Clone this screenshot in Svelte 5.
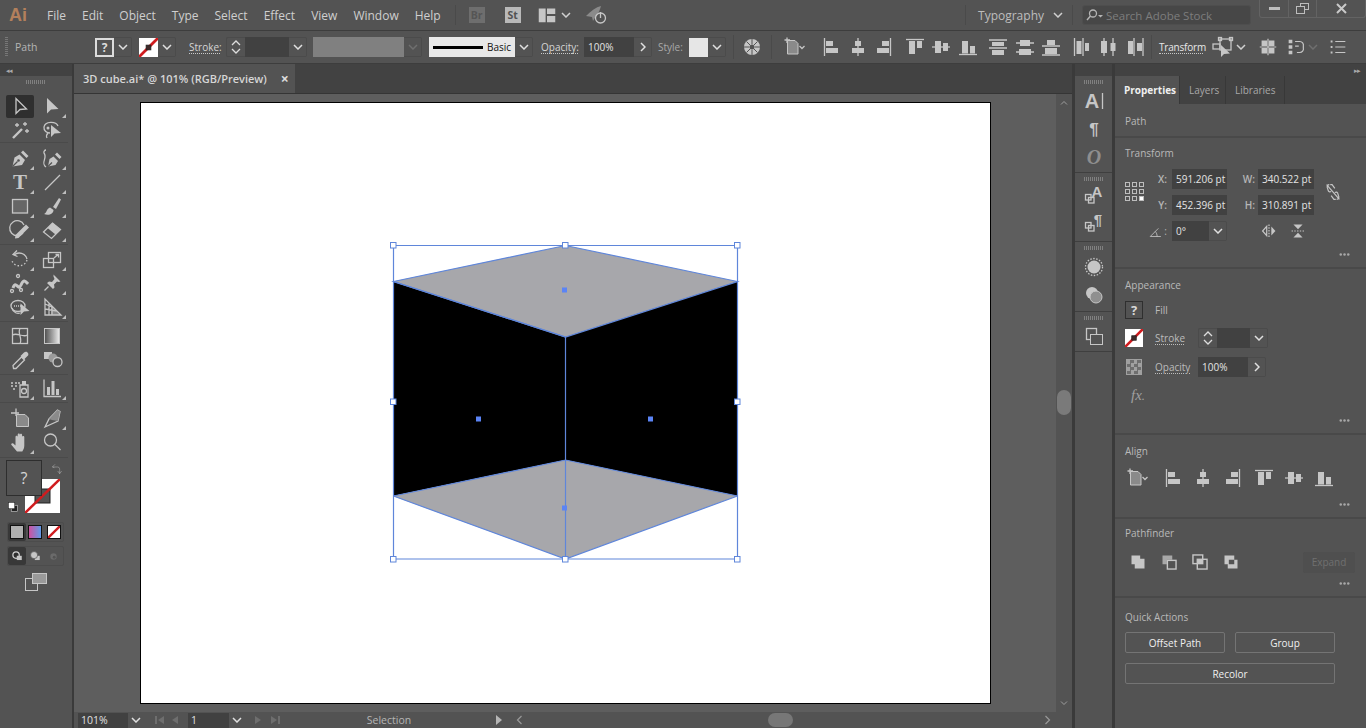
<script>
  const s = 'fill="none" stroke="#c6c6c6" stroke-width="1.3"';
  const f = 'fill="#c6c6c6"';
  const d = 'fill="none" stroke="#535353" stroke-width="1.2"';
  const serif = 'font-family="Liberation Serif" text-anchor="middle"';

  const icons = {
    select: `<path d="M8 4.500V19.500l4-4 6.500-.5z" ${s}/>`,
    direct: `<path d="M7 4V19.500l4-4 7.500-.5z" ${f}/>`,
    wand: `<path d="M5 20l9-9" fill="none" stroke="#c6c6c6" stroke-width="2.400"/><path d="M9 5v4M7 7h4M17 4v4M15 6h4M19 11v4M17 13h4" ${s} stroke-width="1"/>`,
    lasso: `<path d="M18 8C16 3 5 3 4 9c-.5 4 3 6 6 6M8 15c-1 1-2 3-1 5" ${s} stroke-width="1.600"/><circle cx="8" cy="10" r="1.500" ${f}/><path d="M11 7v12l3.500-3.500 6.500-.5z" ${f}/>`,
    pen: `<path d="M4.500 20.500l2-9 5-3 5.500 5.500-3 5z" ${f}/><path d="M4.500 20.500l5-5" ${d}/><circle cx="10.500" cy="14.500" r="1.300" fill="#535353"/><path d="M13 6.500L15 4.500l5.500 5.500-2 2z" ${f}/>`,
    curve: `<path d="M8 20.500l1.500-7.500 4-2.500 4.500 4.500-2.500 4z" ${f}/><path d="M15 8.500l2-2 4.500 4.500-2 2z" ${f}/><path d="M8 20.500l4-4" ${d}/><path d="M6 21C0 17 8 12 4 7c-.5-1 .5-3 2-3" ${s}/>`,
    type: `<text x="12" y="19" ${serif} font-weight="700" font-size="21" fill="#c6c6c6">T</text>`,
    line: `<path d="M5 20L20 5" ${s} stroke-width="1.500"/>`,
    rect: `<rect x="4.500" y="5.500" width="15" height="13.500" fill="#666" stroke="#c6c6c6" stroke-width="1.300"/>`,
    brush: `<path d="M13 13L19 4l2 1.500-5 9.500z" ${f}/><path d="M4 20c3-1 2-5 6-6.500l3.500 2.500c0 4-5 6-9.500 4z" ${f}/>`,
    shaper: `<path d="M15 15a7.500 7.500 0 1 1 1-8" ${s} stroke-width="2"/><path d="M7 20.500l.5-3.500L18 6.500l3 3L10.500 20z" ${f}/>`,
    eraser: `<path d="M3.500 14L12.500 5l8 6.500-9 9z" ${s}/><path d="M12.500 5l8 6.500-5 5-8-6.500z" ${f}/>`,
    rotate: `<path d="M9 3.500L5 7.500l4.500 2" ${s}/><path d="M6 8a8 8 0 0 1 13 4" ${s} stroke-width="1.500"/><path d="M19 13a8 8 0 0 1-15 1" ${s} stroke-width="1.500" stroke-dasharray="1.500 2"/>`,
    scale: `<rect x="3.500" y="11.500" width="10" height="9" ${s}/><rect x="8.500" y="5.500" width="12" height="10" ${s}/><path d="M14 11l4-3.500M15.500 7.500H18.500V10.500" ${s}/>`,
    warp: `<path d="M5 17c3-9 5 4 8-3s5-3 7-1" fill="none" stroke="#c6c6c6" stroke-width="3"/><circle cx="4" cy="20" r="1.500" ${s}/><circle cx="10" cy="5" r="1.500" ${s}/><circle cx="13" cy="19" r="1.500" ${s}/>`,
    pin: `<path d="M13.500 3.500l7 7-2 .5-1.500-.5-3 3 .5 3-1.500 1.500-6-6L9 10.500l3 .5 2.500-3-1-2.500z" ${f}/><path d="M8.500 15.500l-4 4" ${s}/>`,
    builder: `<ellipse cx="10" cy="11" rx="7" ry="5.500" ${s}/><path d="M6 11h7" ${s} stroke-dasharray="1 1"/><path d="M4 13c1 5 6 6 8 5" ${s}/><path d="M12.500 8.500v11.500l3.500-3.500 5.500-.5z" ${f}/>`,
    persp: `<path d="M5 4v16h16L5 4zM5 9l7 3v8M5 14l12 2M9 8.500V20" ${s} stroke-width="1"/><path d="M11 10l10 10H11z" fill="#c6c6c6" opacity=".45"/>`,
    mesh: `<rect x="4.500" y="4.500" width="15" height="15" ${s}/><path d="M4.500 11c5-3 10 3 15 0M12 4.500c-3 5 3 10 0 15" ${s} stroke-width="1"/>`,
    gradient: `<defs><linearGradient id="gr"><stop offset="0" stop-color="#4e4e4e"/><stop offset="1" stop-color="#ededed"/></linearGradient></defs><rect x="4.500" y="4.500" width="15" height="15" fill="url(#gr)" stroke="#c6c6c6"/>`,
    dropper: `<path d="M5.500 20.500l-.5-3 8.500-8.500 3 3-8.500 8.500z" ${s}/><path d="M12.500 8l3.500-3.500c2.500-2.500 6 1 3.500 3.500L16 11.500z" ${f}/>`,
    blend: `<rect x="4" y="4" width="8" height="7" ${f}/><circle cx="13" cy="10" r="4.500" fill="#9a9a9a"/><circle cx="17.500" cy="14" r="4.500" fill="#535353" stroke="#c6c6c6" stroke-width="1.300"/>`,
    spray: `<path d="M12 9h8v12h-8z" ${s}/><rect x="14" y="5" width="4" height="4" ${f}/><circle cx="16" cy="15" r="2.500" ${s}/><path d="M3 7h2M7 7h2M10 7h2M3 10h2M7 10h2M5 13h2" ${s} stroke-width="2"/>`,
    graph: `<path d="M4 3.500V20.500H21" ${s}/><path d="M7 11h3v8H7zM11.500 5h3v14h-3zM16 13h3v6h-3z" ${f}/>`,
    artboard: `<path d="M8 2.500V10M3 7h8" ${s} stroke-width="1"/><path d="M8.500 8.500H17l3.500 3.500v8.500h-12z" fill="#8a8a8a" stroke="#c6c6c6"/>`,
    slice: `<path d="M5 21L9 13 17.500 4l2.500 1.500-2 9.500z" ${s}/><path d="M9 13l8.500-9 2.500 1.500-2 9.500-6-1z" fill="#8a8a8a"/>`,
    hand: `<path d="M9 21.500L3.500 15c-1-1.200 .8-2.500 1.800-1.500L7.500 15.500V7c0-1.600 2.200-1.600 2.200 0V4.800c0-1.600 2.200-1.600 2.200 0V5c0-1.600 2.200-1.600 2.200 0V7c0-1.400 2.200-1.400 2.200 0v8.500c0 2.500-.8 4-2 6z" ${f}/>`,
    zoom: `<circle cx="10.500" cy="10" r="6" ${s} stroke-width="1.500"/><path d="M15 14.500l5.500 5.500" ${s} stroke-width="2.400"/>`,
    draw1: `<circle cx="10" cy="10" r="4.500" fill="#2e2e2e" stroke="#d2d2d2" stroke-width="1.800"/><rect x="11" y="11" width="7" height="6" ${f}/>`,
    draw2: `<rect x="11" y="11" width="7" height="6" ${f}/><circle cx="10" cy="10" r="5" ${f} stroke="#535353"/>`,
    draw3: `<circle cx="12" cy="12" r="4.500" fill="#6b6b6b"/><circle cx="13" cy="13" r="2" fill="#535353"/>`,
    screen: `<rect x="1.500" y="8.500" width="12" height="12" fill="#535353" stroke="#c6c6c6"/><rect x="8.500" y="3.500" width="14" height="10" fill="#9a9a9a" stroke="#c6c6c6"/>`,
    charA: `<text x="10" y="19" font-family="Liberation Sans" text-anchor="middle" font-weight="700" font-size="20" fill="#c6c6c6">A</text><path d="M20.500 4v16" ${s} stroke-width="1"/>`,
    para: `<text x="12" y="18" font-family="Liberation Sans" text-anchor="middle" font-weight="700" font-size="17" fill="#c6c6c6">¶</text>`,
    opent: `<text x="12" y="19" ${serif} font-style="italic" font-weight="700" font-size="20" fill="#8e8e8e">O</text>`,
    charS: `<text x="15" y="15" font-family="Liberation Sans" text-anchor="middle" font-weight="700" font-size="15" fill="#c6c6c6">A</text><rect x="3.500" y="12.500" width="5.500" height="5.500" ${s} stroke-width="1"/><rect x="6.500" y="15.500" width="5.500" height="5.500" ${s} stroke-width="1"/>`,
    paraS: `<text x="16" y="15" font-family="Liberation Sans" text-anchor="middle" font-weight="700" font-size="15" fill="#c6c6c6">¶</text><rect x="3.500" y="12.500" width="5.500" height="5.500" ${s} stroke-width="1"/><rect x="6.500" y="15.500" width="5.500" height="5.500" ${s} stroke-width="1"/>`,
    sphere: `<circle cx="12" cy="12" r="6.500" ${f}/><circle cx="12" cy="12" r="8.500" ${s} stroke-width="1" stroke-dasharray="1.500 1.500"/>`,
    trans: `<circle cx="10" cy="10" r="6" ${f}/><circle cx="14" cy="14" r="6" fill="#8f8f8f" stroke="#c6c6c6"/>`,
    layers: `<rect x="4.500" y="3.500" width="10" height="11" ${s} stroke-width="1"/><rect x="8.500" y="9.500" width="12" height="10" fill="#535353" stroke="#c6c6c6"/>`,
    globe: `<circle cx="12" cy="12" r="8" ${f}/><circle cx="12" cy="12" r="2.500" fill="#535353"/><path d="M12 4v5M12 15v5M4 12h5M15 12h5M6.500 6.500l3.500 3.500M14 14l3.500 3.500M17.500 6.500L14 10M10 14l-3.500 3.500" fill="none" stroke="#535353" stroke-width="1"/>`,
    abAlign: `<path d="M5 2.500V8M2.500 5H8" ${s} stroke-width="1"/><path d="M5.500 5.500H13l3 3v10.500H5.500z" fill="#8a8a8a" stroke="#c6c6c6"/><path d="M17.500 11l2.500 2.500 2.500-2.500" ${s} stroke-width="1"/>`,
    alL: `<path d="M5.500 3v18" ${s}/><path d="M7 6h7v5H7zM7 13h12v5H7z" ${f}/>`,
    alC: `<path d="M12 3v18" ${s}/><path d="M9 6h6v5H9zM6 13h12v5H6z" ${f}/>`,
    alR: `<path d="M18.500 3v18" ${s}/><path d="M10 6h7v5h-7zM5 13h12v5H5z" ${f}/>`,
    alT: `<path d="M3 4.500h18" ${s}/><path d="M6 6h6v13H6zM14 6h5v7h-5z" ${f}/>`,
    alM: `<path d="M3 12h18" ${s}/><path d="M6 6h6v12H6zM14 8h5v8h-5z" ${f}/>`,
    alB: `<path d="M3 19.500h18" ${s}/><path d="M6 6h6v12.500H6zM14 11h5v7.500h-5z" ${f}/>`,
    dT: `<path d="M3 5h18M3 13h18" ${s}/><path d="M6 7h12v4H6zM6 15h12v5H6z" ${f}/>`,
    dM: `<path d="M3 8h18M3 17h18" ${s}/><path d="M7 5h10v6H7zM6 14h12v6H6z" ${f}/>`,
    dB: `<path d="M3 11h18M3 20h18" ${s}/><path d="M8 5h8v5H8zM6 13h12v6H6z" ${f}/>`,
    dL: `<path d="M4.500 3v18M13 3v18" ${s}/><path d="M6.500 6h5v13h-5zM15 8h4v8h-4z" ${f}/>`,
    dC: `<path d="M8 3v18M17 3v18" ${s}/><path d="M5 6h6v12H5zM14.500 8h5v8h-5z" ${f}/>`,
    dR: `<path d="M11 3v18M20 3v18" ${s}/><path d="M5 6h5v13H5zM14 8h5v8h-5z" ${f}/>`,
    tfBox: `<rect x="9" y="4" width="11" height="11" ${s} stroke-width="1"/><rect x="7.500" y="2.500" width="3" height="3" ${s} stroke-width="1"/><rect x="18.500" y="2.500" width="3" height="3" ${s} stroke-width="1"/><rect x="2" y="9" width="7" height="5" ${s} stroke-width="1"/><path d="M10 10v12l3-3 6-.5z" ${f}/>`,
    snap: `<path d="M5 5h6v6H5zM13 5h6v6h-6zM5 13h6v6H5zM13 13h6v6h-6z" ${f}/><path d="M12 3v18M3 12h18" ${s} stroke-width="1"/>`,
    isolate: `<path d="M4 4h4v4H4zM4 10h4v4H4zM4 16h4v4H4z" ${f}/><path d="M11 6h5a4 4 0 0 1 4 5v2a4 4 0 0 1-4 5h-3M11 11h4" ${s} stroke-width="1.500"/>`,
    list: `<path d="M9 6h11M9 12h11M9 18h11" ${s}/><path d="M4 5h2v2H4zM4 11h2v2H4zM4 17h2v2H4z" ${f}/>`,
    layout: `<path d="M3 5h7.500v15H3zM12 5h9v6h-9zM12 13h9v7h-9z" ${f}/>`,
    rocket: `<path d="M2 13c5-5 10-9 15-10-1 3-2 7-5 10l-3 5-1-4z" fill="#8a8a8a"/><circle cx="16.500" cy="15" r="5" ${s} stroke-width="1.500"/><path d="M16.500 9v6" ${s} stroke-width="1.500"/>`,
    link: `<path d="M8 4c-2 0-3 2-2 4l1 3c.5 1 2 1 3 .5M16 20c2 0 3-2 2-4l-1-3c-.5-1-2-1-3-.5M9 4h2l3 4M15 20h-2l-3-4M5 4l14 16" ${s}/>`,
    flipH: `<path d="M12 5v14" ${s} stroke-dasharray="1.500 1.500"/><path d="M9.500 7v10L5 12z" ${s}/><path d="M14.500 7v10l4.500-5z" ${f}/>`,
    flipV: `<path d="M5 12h14" ${s} stroke-dasharray="1.500 1.500"/><path d="M7 5h10l-5 5z" ${f}/><path d="M7 19h10l-5-5z" ${f}/>`,
    pf1: `<path d="M6 6h8v3h4v9h-9v-4H6z" ${f}/>`,
    pf2: `<path d="M6 6h9v4H10v4H6z" fill="#a8a8a8"/><rect x="10.500" y="10.500" width="8" height="8" ${s} stroke-width="1.200"/>`,
    pf3: `<rect x="5.500" y="5.500" width="9" height="8" ${s} stroke-width="1.200"/><rect x="9.500" y="9.500" width="9" height="9" ${s} stroke-width="1.200"/><path d="M10 10h4.500v3.500H10z" ${f}/>`,
    pf4: `<path d="M6 6h9v4h-5v4H6zM15 10h3v8H9v-4h6z" ${f}/>`,
    dots: `<circle cx="6" cy="12" r="2" fill="#a8a8a8"/><circle cx="12" cy="12" r="2" fill="#a8a8a8"/><circle cx="18" cy="12" r="2" fill="#a8a8a8"/>`,
    triangle: `<path d="M2 20L15 7M2 20h17M10 12c2 2 3 5 3 8" ${s} stroke-width="1.200"/>`,
    swap: `<path d="M9 5L5 9l3 1M5.500 9H13c3 0 3 3 3 5v5M13 15l3 4 3-4" ${s} opacity=".5"/>`,
    defcol: `<rect x="9" y="9" width="11" height="11" fill="#222" stroke="#ddd"/><rect x="4" y="4" width="11" height="11" fill="#fff" stroke="#222"/>`,
    none: `<rect width="24" height="24" fill="#fff"/><path d="M0 24L24 0" stroke="#d01c1f" stroke-width="3.500"/><rect x="9" y="9" width="6" height="6" fill="#3f2a2a" stroke="#222" stroke-width="1"/>`,
    noneplain: `<rect width="24" height="24" fill="#fff"/><path d="M1 23L23 1" stroke="#d01c1f" stroke-width="4"/>`,
    chevU: `<path d="M6 15l6-6 6 6" ${s}/>`,
    chevD: `<path d="M6 9l6 6 6-6" ${s}/>`
  };

  const toolSets = [
    [['select', 0], ['direct', 1], ['wand', 0], ['lasso', 0]],
    [['pen', 1], ['curve', 1], ['type', 1], ['line', 1], ['rect', 1], ['brush', 1], ['shaper', 1], ['eraser', 1]],
    [['rotate', 1], ['scale', 1], ['warp', 1], ['pin', 1], ['builder', 1], ['persp', 1]],
    [['mesh', 0], ['gradient', 0], ['dropper', 1], ['blend', 0]],
    [['spray', 1], ['graph', 1]],
    [['artboard', 0], ['slice', 1], ['hand', 1], ['zoom', 0]]
  ];

  const dockSets = [
    ['charA', 'para', 'opent'],
    ['charS', 'paraS'],
    ['sphere', 'trans'],
    ['layers']
  ];

  const menus = ['File', 'Edit', 'Object', 'Type', 'Select', 'Effect', 'View', 'Window', 'Help'];
  const alignGroups = [['alL', 'alC', 'alR'], ['alT', 'alM', 'alB'], ['dT', 'dM', 'dB'], ['dL', 'dC', 'dR']];
  const panelAlign = ['alL', 'alC', 'alR', 'alT', 'alM', 'alB'];
  const handles = [[393, 245], [565, 245], [737, 245], [393, 401.5], [737, 401.5], [393, 559], [565, 559], [737, 559]];
  const centers = [[564.5, 290], [478.5, 419], [650.5, 419], [564.5, 508]];
</script>

{#snippet ico(name, size = 24)}
  <svg class="ico" width={size} height={size} viewBox="0 0 24 24">{@html icons[name]}</svg>
{/snippet}

{#snippet chev(cls = '')}
  <span class="chev {cls}"><svg width="10" height="6" viewBox="0 0 10 6"><path d="M1 1l4 4 4-4" fill="none" stroke="currentColor" stroke-width="1.500"/></svg></span>
{/snippet}

{#snippet spinner()}
  <span class="spin">
    <svg width="10" height="6" viewBox="0 0 10 6"><path d="M1 5l4-4 4 4" fill="none" stroke="#ddd" stroke-width="1.300"/></svg>
    <svg width="10" height="6" viewBox="0 0 10 6"><path d="M1 1l4 4 4-4" fill="none" stroke="#ddd" stroke-width="1.300"/></svg>
  </span>
{/snippet}

{#snippet more()}
  <div class="more">{@render ico('dots', 15)}</div>
{/snippet}

{#snippet grip()}
  <div class="hgrip"></div>
{/snippet}

<div class="app">
  <header class="menubar">
    <span class="logo">Ai</span>
    <nav class="menus">
      {#each menus as m}<span>{m}</span>{/each}
    </nav>
    <span class="vsep m14"></span>
    <span class="bridge dim m13">Br</span>
    <span class="bridge lit m20">St</span>
    <span class="m15 icbox">{@render ico('layout', 22)}</span>
    <span class="m2">{@render chev('bare')}</span>
    <span class="m12 icbox">{@render ico('rocket', 24)}</span>
    <span class="grow"></span>
    <span class="vsep"></span>
    <span class="workspace">Typography</span>
    <span class="m8">{@render chev('bare')}</span>
    <span class="vsep m8"></span>
    <div class="search m9">
      <svg width="20" height="14" viewBox="0 0 20 14"><circle cx="8" cy="5.500" r="3.500" fill="none" stroke="#b5b5b5" stroke-width="1.300"/><path d="M5.500 8L2 12" stroke="#b5b5b5" stroke-width="1.500"/><path d="M13 7h5l-2.500 2.500z" fill="#b5b5b5"/></svg>
      <span>Search Adobe Stock</span>
    </div>
    <div class="winbtns m8">
      <span class="wb"><svg width="11" height="4"><rect width="11" height="3" fill="#bdbdbd"/></svg></span>
      <span class="wb narrow"><svg width="13" height="11"><rect x="4.500" y=".5" width="8" height="6" fill="none" stroke="#bdbdbd"/><rect x=".5" y="3.500" width="8" height="7" fill="#535353" stroke="#bdbdbd"/></svg></span>
      <span class="wb wide"><svg width="11" height="11"><path d="M1 1l9 9M10 1l-9 9" stroke="#c9c9c9" stroke-width="2"/></svg></span>
    </div>
  </header>

  <div class="ctrlbar">
    <span class="vgrip"></span>
    <span class="docname">Path</span>
    <span class="swatch qm">?</span>{@render chev()}
    <span class="swatch m7">{@render ico('none', 19)}</span>{@render chev()}
    <span class="dotted w31 m13">Stroke:</span>
    <span class="m6 flexed">{@render spinner()}<span class="field w44"></span>{@render chev()}</span>
    <span class="greybar m6"></span>{@render chev('off')}
    <span class="basic m7"><i></i><b>Basic</b></span>{@render chev()}
    <span class="dotted w37 m8">Opacity:</span>
    <span class="field w50 m6 val">100%</span>{@render chev('right')}
    <span class="lab m6">Style:</span>
    <span class="swatch plain m6"></span>{@render chev()}
    <span class="vsep tall m7"></span>
    <span class="m6 icbox">{@render ico('globe')}</span>
    <span class="vsep tall m7"></span>
    <span class="m10 icbox">{@render ico('abAlign')}</span>
    <div class="aligns m12">
      {#each alignGroups as g}
        <div class="algroup">{#each g as a}<span class="cell">{@render ico(a, 24)}</span>{/each}</div>
      {/each}
    </div>
    <span class="vsep tall m3"></span>
    <span class="dotted strong m7">Transform</span>
    <span class="m8 icbox">{@render ico('tfBox')}</span>
    <span>{@render chev('bare')}</span>
    <span class="m10 icbox">{@render ico('snap', 22)}</span>
    <span class="m6 icbox">{@render ico('isolate', 22)}</span>
    <span>{@render chev('bare off')}</span>
    <span class="m8 icbox">{@render ico('list', 22)}</span>
  </div>

  <div class="main">
    <aside class="tools">
      <div class="phead"><span class="arrows">◂◂</span></div>
      {@render grip()}
      {#each toolSets as set}
        <div class="tsec">
          {#each set as [name, fly]}
            <span class="tool" class:on={name === 'select'} class:fly={fly}>{@render ico(name, 24)}</span>
          {/each}
        </div>
      {/each}
      <div class="fillstroke">
        <span class="st-box"><svg width="35" height="34" viewBox="0 0 35 34"><rect width="35" height="34" fill="#fff"/><rect x="10" y="10" width="15" height="14" fill="#535353" stroke="#222"/><path d="M0 34L35 0" stroke="#d01c1f" stroke-width="2.500"/></svg></span>
        <span class="fl-box">?</span>
        <span class="fs-swap">{@render ico('swap', 16)}</span>
        <span class="fs-def">{@render ico('defcol', 14)}</span>
      </div>
      <div class="trio colors">
        <span class="on"><i class="c-grey"></i></span>
        <span><i class="c-grad"></i></span>
        <span><i class="c-none">{@render ico('noneplain', 14)}</i></span>
      </div>
      <div class="trio modes">
        <span class="on">{@render ico('draw1', 17)}</span>
        <span>{@render ico('draw2', 17)}</span>
        <span>{@render ico('draw3', 17)}</span>
      </div>
      <div class="screen">{@render ico('screen', 24)}</div>
    </aside>

    <section class="doc">
      <div class="tabs">
        <div class="tab"><span>3D cube.ai* @ 101% (RGB/Preview)</span><em>×</em></div>
      </div>
      <div class="work">
        <div class="canvas">
          <div class="artboard">
            <svg class="art" width="851" height="602" viewBox="140 102 851 602">
              <path d="M393 281.500L565.500 245.500 737.500 281.500 565.500 337z" fill="#a7a7ab"/>
              <path d="M393 281.500L565.500 337V460L393 496z" fill="#000"/>
              <path d="M737.500 281.500L565.500 337V460L737.500 496z" fill="#000"/>
              <path d="M393 496L565.500 460 737.500 496 565.500 559z" fill="#a7a7ab"/>
              <g fill="none" stroke="#5f86da" stroke-width="1.200">
                <path d="M393.500 245.500H737.500V559H393.500z"/>
                <path d="M393.500 281.500L565.500 245.500 737.500 281.500 565.500 337z"/>
                <path d="M393.500 281.500L565.500 337M565.500 337V559M393.500 496L565.500 460 737.500 496M393.500 496L565.500 559 737.500 496"/>
              </g>
              {#each centers as [x, y]}
                <rect x={x - 2.5} y={y - 2.5} width="5" height="5" fill="#5b84f5"/>
              {/each}
              {#each handles as [x, y]}
                <rect x={x - 2.5} y={y - 2.5} width="5.500" height="5.500" fill="#fff" stroke="#5f86da"/>
              {/each}
            </svg>
          </div>
        </div>
        <div class="vscroll">
          <span class="up">{@render ico('chevU', 12)}</span>
          <span class="thumb"></span>
          <span class="dn">{@render ico('chevD', 12)}</span>
        </div>
      </div>
      <div class="status">
        <span class="sfield w50">101%</span>{@render chev('sm')}
        <span class="nav m10"><svg width="30" height="10"><path d="M1 1h2v8H1zM10 1v8L4 5zM24 1v8l-6-4z" fill="#6e6e6e"/></svg></span>
        <span class="sfield w41 m4">1</span>{@render chev('sm')}
        <span class="nav m8"><svg width="30" height="10"><path d="M2 1v8l6-4zM18 1v8l6-4zM25 1h2v8h-2z" fill="#6e6e6e"/></svg></span>
        <span class="modetext">Selection</span>
        <svg class="play" width="8" height="10"><path d="M1 0v10l6-5z" fill="#b5b5b5"/></svg>
        <svg class="hl" width="7" height="10"><path d="M5.500 1L1.500 5l4 4" fill="none" stroke="#999" stroke-width="1.200"/></svg>
        <div class="htrack"><span></span></div>
        <svg class="hr" width="7" height="10"><path d="M1.500 1l4 4-4 4" fill="none" stroke="#999" stroke-width="1.200"/></svg>
      </div>
    </section>

    <aside class="dock">
      <div class="phead"></div>
      {#each dockSets as set, i}
        <div class="dsec dsec{i}">
          {@render grip()}
          {#each set as it}<span class="dicon">{@render ico(it, 24)}</span>{/each}
        </div>
      {/each}
    </aside>

    <aside class="props">
      <div class="phead right"><span class="arrows">▸▸</span></div>
      <div class="ptabs">
        <span class="active">Properties</span>
        <span class="t2">Layers</span>
        <span class="t3">Libraries</span>
      </div>
      <div class="psec sec-path"><h4>Path</h4></div>

      <div class="psec sec-tf">
        <h4>Transform</h4>
        <div class="tfgrid">
          <span class="refpt">
            <svg width="20" height="20" viewBox="0 0 20 20">
              {#each [0, 7, 14] as y}{#each [0, 7, 14] as x}
                <rect x={x + .5} y={y + .5} width="4" height="4" fill={x === 14 && y === 14 ? '#fff' : 'none'} stroke="#bdbdbd"/>
              {/each}{/each}
            </svg>
          </span>
          <div class="tfrows">
            <label>X:</label><span class="field val">591.206 pt</span>
            <label class="lw">W:</label><span class="field val">340.522 pt</span>
            <label>Y:</label><span class="field val">452.396 pt</span>
            <label class="lw">H:</label><span class="field val">310.891 pt</span>
            <label>{@render ico('triangle', 15)}<b>:</b></label>
            <span class="flexed"><span class="field val">0°</span>{@render chev('ang')}</span>
            <span class="flips">{@render ico('flipH', 22)}{@render ico('flipV', 22)}</span>
          </div>
          <span class="linkic">{@render ico('link', 22)}</span>
        </div>
        {@render more()}
      </div>

      <div class="psec sec-ap">
        <h4>Appearance</h4>
        <div class="aprow r1"><span class="apsw q">?</span><span class="aplab">Fill</span></div>
        <div class="aprow r2">
          <span class="apsw">{@render ico('none', 18)}</span>
          <span class="aplab"><u>Stroke</u></span>
          {@render spinner()}<span class="field w33"></span>{@render chev()}
        </div>
        <div class="aprow r3">
          <span class="apsw check"></span>
          <span class="aplab"><u>Opacity</u></span>
          <span class="field val w50">100%</span>{@render chev('right')}
        </div>
        <div class="fx">fx<small>.</small></div>
        {@render more()}
      </div>

      <div class="psec sec-al">
        <h4>Align</h4>
        <div class="alrow">
          <span class="icbox ab">{@render ico('abAlign')}</span>
          {#each panelAlign as a}<span class="cell30">{@render ico(a, 24)}</span>{/each}
        </div>
        {@render more()}
      </div>

      <div class="psec sec-pf">
        <h4>Pathfinder</h4>
        <div class="pfrow">
          {#each ['pf1', 'pf2', 'pf3', 'pf4'] as p}<span class="cell31">{@render ico(p, 26)}</span>{/each}
          <span class="expand">Expand</span>
        </div>
        {@render more()}
      </div>

      <div class="psec sec-qa">
        <h4>Quick Actions</h4>
        <div class="qa">
          <button>Offset Path</button>
          <button>Group</button>
          <button class="full">Recolor</button>
        </div>
      </div>
    </aside>
  </div>
</div>

<style>
  :global(body) {
    margin: 0;
    background: #535353;
  }

  .app {
    width: 1366px;
    height: 728px;
    overflow: hidden;
    display: flex;
    flex-direction: column;
    background: #535353;
    color: #c4c4c4;
    font-family: "Open Sans", "Liberation Sans", sans-serif;
    font-size: 10.5px;
  }

  .ico { display: block; flex: none; }
  .icbox { display: flex; align-items: center; }
  .flexed { display: flex; align-items: center; }
  .grow { flex: 1; }

  .m2 { margin-left: 2px; }
  .m3 { margin-left: 3px; }
  .m4 { margin-left: 4px; }
  .m6 { margin-left: 6px; }
  .m7 { margin-left: 7px; }
  .m8 { margin-left: 8px; }
  .m9 { margin-left: 9px; }
  .m10 { margin-left: 10px; }
  .m12 { margin-left: 12px; }
  .m13 { margin-left: 13px; }
  .m14 { margin-left: 14px; }
  .m15 { margin-left: 15px; }
  .m20 { margin-left: 20px; }

  /* menu bar */
  .menubar {
    height: 30px;
    flex: none;
    display: flex;
    align-items: center;
    border-bottom: 1px solid #3d3d3d;
    box-sizing: content-box;
  }
  .logo {
    margin-left: 9px;
    width: 18px;
    font: 700 18px "Liberation Sans", sans-serif;
    color: #b3805c;
  }
  .menus {
    display: flex;
    gap: 16px;
    margin-left: 20px;
    font-size: 12px;
    color: #cfcfcf;
  }
  .vsep {
    width: 1px;
    height: 20px;
    background: #4a4a4a;
    flex: none;
  }
  .vsep.tall { height: 24px; }
  .bridge {
    width: 16px;
    height: 16px;
    display: flex;
    align-items: center;
    justify-content: center;
    font-size: 10.5px;
    font-weight: 700;
    flex: none;
  }
  .bridge.dim { background: #6e6e6e; color: #555; }
  .bridge.lit { background: #b9b9b9; color: #535353; }
  .workspace {
    margin-left: 12px;
    font-size: 12px;
    color: #bdbdbd;
  }
  .search {
    width: 169px;
    height: 20px;
    box-sizing: border-box;
    background: #474747;
    border: 1px solid #4e4e4e;
    border-radius: 3px;
    display: flex;
    align-items: center;
    padding-left: 2px;
    gap: 1px;
    color: #7d7d7d;
    font-size: 11.5px;
  }
  .winbtns {
    align-self: flex-start;
    display: flex;
    height: 18px;
    width: 107px;
    box-sizing: border-box;
    border: 1px solid #636363;
    border-top: 0;
    border-radius: 0 0 3px 3px;
    flex: none;
  }
  .wb {
    width: 28px;
    display: flex;
    align-items: center;
    justify-content: center;
    border-right: 1px solid #636363;
  }
  .wb.narrow { width: 27px; }
  .wb.wide { flex: 1; border-right: 0; }

  /* control bar */
  .ctrlbar {
    height: 33px;
    flex: none;
    display: flex;
    align-items: center;
    padding-left: 5px;
    box-sizing: border-box;
    border-bottom: 1px solid #3d3d3d;
    white-space: nowrap;
    font-size: 10.5px;
  }
  .vgrip {
    width: 3px;
    height: 20px;
    flex: none;
    background: repeating-linear-gradient(#777 0 1px, transparent 1px 2px);
  }
  .docname { width: 80px; margin-left: 7px; color: #b5b5b5; }
  .swatch {
    width: 19px;
    height: 19px;
    flex: none;
    box-sizing: border-box;
    display: flex;
    align-items: center;
    justify-content: center;
  }
  .swatch.qm {
    border: 2px solid #dcdcdc;
    color: #dcdcdc;
    font-weight: 700;
    font-size: 12px;
  }
  .swatch.plain { background: #e6e6e6; }
  .chev {
    width: 18px;
    height: 20px;
    flex: none;
    box-sizing: border-box;
    display: flex;
    align-items: center;
    justify-content: center;
    border: 1px solid #4b4b4b;
    border-left: 0;
    border-radius: 0 2px 2px 0;
    color: #e0e0e0;
  }
  .chev.right svg { transform: rotate(-90deg); }
  .chev.bare { border: 0; width: 12px; color: #d0d0d0; }
  .chev.off { color: #6f6f6f; }
  .chev.sm { border: 0; width: 16px; height: 15px; }
  .chev.ang { height: 20px; }
  .dotted {
    flex: none;
    border-bottom: 1px dotted #c8c8c8;
    line-height: 12px;
    color: #d6d6d6;
    font-size: 10px;
  }
  .dotted.strong { color: #e8e8e8; width: 44px; letter-spacing: -.2px; }
  .w31 { width: 31px; }
  .w37 { width: 37px; }
  .spin {
    width: 19px;
    height: 20px;
    flex: none;
    box-sizing: border-box;
    border: 1px solid #4b4b4b;
    border-right: 0;
    border-radius: 2px 0 0 2px;
    display: flex;
    flex-direction: column;
    align-items: center;
    justify-content: center;
    gap: 2px;
  }
  .field {
    height: 20px;
    box-sizing: border-box;
    display: flex;
    align-items: center;
    background: #414141;
    flex: none;
    white-space: nowrap;
    overflow: hidden;
  }
  .val { color: #e4e4e4; padding-left: 4px; font-size: 10px; }
  .w33 { width: 33px; }
  .w44 { width: 44px; }
  .w50 { width: 50px; }
  .greybar { width: 91px; height: 20px; background: #808080; flex: none; }
  .basic {
    width: 86px;
    height: 20px;
    flex: none;
    background: #e8e8e8;
    display: flex;
    align-items: center;
    color: #111;
  }
  .basic i { width: 50px; height: 3px; background: #000; margin-left: 4px; }
  .basic b { font-weight: 400; margin-left: 4px; font-size: 10px; }
  .lab { color: #a9a9a9; flex: none; width: 25px; font-size: 10px; }
  .aligns { display: flex; gap: 4px; }
  .algroup { display: flex; }
  .cell { width: 26.5px; display: flex; justify-content: center; }

  /* main */
  .main {
    flex: 1;
    min-height: 0;
    display: flex;
    background: #3a3a3a;
  }
  .phead {
    height: 12px;
    background: #424242;
    display: flex;
    align-items: center;
    font-size: 7px;
    color: #aaa;
  }
  .phead.right { justify-content: flex-end; }
  .arrows { margin: 0 6px; letter-spacing: -1px; }
  .hgrip {
    height: 4px;
    width: 20px;
    margin: 4px auto 0;
    background: repeating-linear-gradient(90deg, #808080 0 1px, transparent 1px 2px);
  }

  /* tools */
  .tools {
    width: 72px;
    flex: none;
    background: #535353;
    margin-right: 2px;
  }
  .tools .hgrip { margin-bottom: 10px; }
  .tsec {
    display: grid;
    grid-template-columns: 28px 32px;
    column-gap: 2px;
    grid-auto-rows: 24px;
    padding: 3px 0 2px 6px;
    margin-right: 4px;
    border-bottom: 1px solid #4a4a4a;
    justify-items: center;
    align-items: center;
  }
  .tsec:nth-of-type(3) { padding: 0; padding-left: 6px; }
  .tsec:nth-of-type(5) { padding-top: 2px; }
  .tsec:nth-of-type(6) { padding-top: 2px; }
  .tsec:nth-of-type(7) { padding-top: 1px; }
  .tsec:nth-of-type(8) { padding-bottom: 3px; }
  .tool {
    position: relative;
    width: 28px;
    height: 23px;
    display: flex;
    align-items: center;
    justify-content: center;
    border-radius: 2px;
  }
  .tool.on { background: #2f2f2f; }
  .tool.fly::after {
    content: "";
    position: absolute;
    right: 0;
    bottom: 0;
    border: 2px solid transparent;
    border-right-color: #bdbdbd;
    border-bottom-color: #bdbdbd;
  }
  .fillstroke {
    position: relative;
    height: 56px;
    margin: 2px 0 6px;
  }
  .fl-box {
    position: absolute;
    left: 6px;
    top: 0;
    width: 36px;
    height: 36px;
    box-sizing: border-box;
    background: #535353;
    border: 1px solid #2e2e2e;
    display: flex;
    align-items: center;
    justify-content: center;
    color: #d6d6d6;
    font-size: 16px;
  }
  .st-box { position: absolute; left: 25px; top: 19px; }
  .fs-swap { position: absolute; left: 49px; top: 1px; }
  .fs-def { position: absolute; left: 6px; top: 40px; }
  .trio {
    display: grid;
    grid-template-columns: repeat(3, 1fr);
    margin: 0 8px 0 7px;
    height: 18px;
    border: 1px solid #4c4c4c;
    border-radius: 2px;
  }
  .colors { margin-bottom: 4px; }
  .trio span {
    display: flex;
    align-items: center;
    justify-content: center;
    border-radius: 2px;
  }
  .trio span.on { background: #383838; }
  .trio i {
    display: block;
    width: 12px;
    height: 12px;
    border: 1px solid #111;
  }
  .c-grey { background: #b0b0b0; }
  .c-grad { background: linear-gradient(90deg, #d050a0, #5f9be8); }
  .c-none { overflow: hidden; }
  .c-none :global(svg) { margin: -1px; }
  .screen { display: flex; justify-content: center; margin-top: 4px; }

  /* document */
  .doc {
    width: 998px;
    flex: none;
    display: flex;
    flex-direction: column;
    background: #535353;
  }
  .tabs {
    height: 30px;
    flex: none;
    box-sizing: border-box;
    background: #424242;
    border-bottom: 1px solid #353535;
  }
  .tab {
    width: 221px;
    height: 29px;
    box-sizing: border-box;
    background: #535353;
    display: flex;
    align-items: center;
    padding-left: 9px;
    color: #d6d6d6;
    font-size: 11px;
    font-weight: 600;
    white-space: nowrap;
  }
  .tab em {
    font-style: normal;
    font-size: 14px;
    font-weight: 700;
    margin-left: 14px;
    color: #ddd;
  }
  .work { flex: 1; min-height: 0; display: flex; }
  .canvas {
    flex: 1;
    background: #5e5e5e;
    overflow: hidden;
    padding: 8px 0 0 66px;
  }
  .artboard {
    position: relative;
    width: 851px;
    height: 602px;
    box-sizing: border-box;
    background: #fff;
    border: 1px solid #000;
  }
  .art { position: absolute; left: -1px; top: -1px; }
  .vscroll {
    width: 16px;
    flex: none;
    display: flex;
    flex-direction: column;
    align-items: center;
    background: #535353;
  }
  .up { margin-top: 3px; }
  .thumb {
    width: 14px;
    height: 25px;
    margin-top: 281px;
    border-radius: 7px;
    background: #7a7a7a;
  }
  .dn { margin-top: auto; margin-bottom: 3px; }
  .status {
    height: 16px;
    flex: none;
    display: flex;
    align-items: center;
    padding-left: 4px;
    background: #535353;
  }
  .sfield {
    height: 15px;
    display: flex;
    align-items: center;
    box-sizing: border-box;
    background: #414141;
    padding-left: 3px;
    color: #e0e0e0;
    flex: none;
  }
  .w41 { width: 41px; }
  .nav { display: flex; }
  .modetext {
    width: 212px;
    text-align: center;
    color: #b5b5b5;
    flex: none;
  }
  .play { margin-left: 0; flex: none; }
  .hl { margin-left: 13px; flex: none; }
  .htrack {
    flex: 1;
    display: flex;
    padding-left: 245px;
  }
  .htrack span {
    width: 25px;
    height: 14px;
    border-radius: 7px;
    background: #777;
  }
  .hr { margin-right: 21px; flex: none; }

  /* dock */
  .dock {
    width: 37px;
    flex: none;
    margin-left: 3px;
    background: #535353;
  }
  .dsec {
    box-sizing: border-box;
    border-bottom: 1px solid #3f3f3f;
    display: flex;
    flex-direction: column;
    align-items: center;
  }
  .dsec0 { height: 97px; }
  .dsec1 { height: 69px; }
  .dsec2 { height: 70px; }
  .dsec3 { height: 40px; }
  .dsec .hgrip { margin-bottom: 3px; }
  .dsec1 .hgrip { margin-bottom: -1px; }
  .dicon { height: 28px; display: flex; align-items: center; }

  /* properties */
  .props {
    width: 251px;
    flex: none;
    margin-left: 3px;
    background: #535353;
    display: flex;
    flex-direction: column;
  }
  .ptabs {
    height: 28px;
    flex: none;
    display: flex;
    background: #424242;
    font-size: 10px;
    color: #a8a8a8;
  }
  .ptabs span {
    display: flex;
    align-items: center;
    padding: 0 9px;
    box-sizing: border-box;
    border-right: 1px solid #383838;
  }
  .ptabs .active {
    width: 65px;
    background: #535353;
    color: #efefef;
    font-weight: 700;
  }
  .ptabs .t2 { width: 46px; }
  .ptabs .t3 { width: 59px; }
  .psec {
    flex: none;
    position: relative;
    box-sizing: border-box;
    border-bottom: 2px solid #494949;
    padding: 0 10px;
  }
  .psec h4 {
    margin: 0;
    font-size: 10px;
    font-weight: 400;
    line-height: 14px;
    color: #b9b9b9;
  }
  .more {
    position: absolute;
    right: 14px;
    bottom: 5px;
  }
  .sec-path { height: 34px; padding-top: 10px; }
  .sec-tf { height: 131px; padding-top: 8px; }
  .sec-ap { height: 166px; padding-top: 9px; }
  .sec-al { height: 84px; padding-top: 9px; }
  .sec-pf { height: 79px; padding-top: 7px; }
  .sec-qa { flex: 1; border-bottom: 0; padding-top: 12px; }

  .tfgrid { display: flex; margin-top: 9px; }
  .refpt { width: 20px; margin-top: 13px; flex: none; }
  .tfrows {
    display: grid;
    grid-template-columns: 22px 55px 21px 56px;
    grid-auto-rows: 20px;
    column-gap: 5px;
    row-gap: 6px;
    align-items: center;
    width: 169px;
    flex: none;
  }
  .tfrows label {
    text-align: right;
    color: #b5b5b5;
    font-size: 10px;
    font-weight: 600;
    display: flex;
    justify-content: flex-end;
    align-items: center;
  }
  .tfrows .lw { margin-right: -2px; }
  .tfrows label b { font-weight: 400; }
  .tfrows .field { width: 100%; }
  .tfrows .flexed .field { width: 37px; }
  .flips {
    grid-column: 3 / 5;
    display: flex;
    gap: 7px;
    padding-left: 26px;
  }
  .linkic { margin: 12px 0 0 8px; }

  .aprow { display: flex; align-items: center; }
  .r1 { margin-top: 9px; }
  .r2 { margin-top: 9px; }
  .r3 { margin-top: 9px; }
  .apsw {
    width: 18px;
    height: 18px;
    box-sizing: border-box;
    flex: none;
    display: flex;
    align-items: center;
    justify-content: center;
  }
  .apsw.q {
    border: 1px solid #2f2f2f;
    color: #d8d8d8;
    font-size: 13px;
    font-weight: 700;
  }
  .apsw.check {
    width: 16px;
    height: 16px;
    margin: 0 1px;
    border: 1px solid #a0a0a0;
    background: repeating-conic-gradient(#6e6e6e 0 25%, #a0a0a0 0 50%) 0 0 / 7px 7px;
  }
  .aplab { width: 43px; margin-left: 12px; color: #bcbcbc; flex: none; white-space: nowrap; font-size: 10px; }
  .aplab u { text-decoration: underline dotted; text-underline-offset: 2px; }
  .fx {
    margin: 10px 0 0 6px;
    font: italic 15px "Liberation Serif", serif;
    color: #a0a0a0;
  }
  .alrow { display: flex; align-items: center; margin-top: 8px; }
  .ab { width: 33px; }
  .cell30 { width: 30.2px; display: flex; justify-content: center; }
  .pfrow { display: flex; align-items: center; margin-top: 10px; height: 24px; }
  .cell31 { width: 31px; display: flex; justify-content: flex-start; }
  .expand {
    margin-left: 54px;
    width: 52px;
    height: 21px;
    border-radius: 2px;
    background: #4f4f4f;
    color: #6f6f6f;
    display: flex;
    align-items: center;
    justify-content: center;
    font-size: 10px;
  }
  .qa {
    display: grid;
    grid-template-columns: 100px 100px;
    grid-auto-rows: 21px;
    gap: 10px;
    margin-top: 8px;
  }
  .qa button {
    font: 400 10px "Open Sans", sans-serif;
    color: #f0f0f0;
    background: transparent;
    border: 1px solid #747474;
    border-radius: 2px;
    padding: 0;
  }
  .qa .full { grid-column: 1 / 3; }
</style>
